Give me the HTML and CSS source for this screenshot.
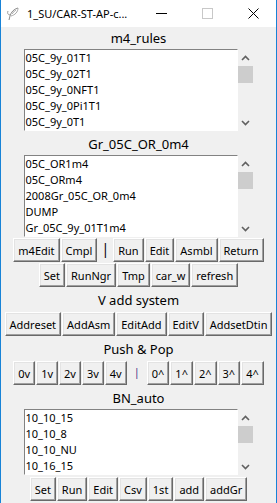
FILE: index.html
```html
<!DOCTYPE html>
<html>
	<head>
		<title>1_SU/CAR-ST-AP-c...</title>
		<link rel="stylesheet" href="styles.css">
	</head>
	<body>
		<div id="window">
			<div id="titlebar">
				<svg class="appIcon" width="16" height="16" viewBox="0 0 16 16">
					<path d="M13 2 C9 3 6 6 5 10 L4 14" fill="none" stroke="#8a8a8a" stroke-width="1"/>
					<path d="M13 2 C13 6 10 9 6 10 M11 4 C9 5 8 7 7 8" fill="none" stroke="#a8a8a8" stroke-width="1"/>
					<path d="M3 5 C2 7 3 9 5 9" fill="none" stroke="#9a9a9a" stroke-width="1"/>
				</svg>
				<span class="titleText">1_SU/CAR-ST-AP-c...</span>
				<span class="winBtn">
					<svg width="11" height="11"><line x1="0" y1="5.5" x2="11" y2="5.5" stroke="#000"/></svg>
				</span>
				<span class="winBtn">
					<svg width="11" height="11"><rect x="0.5" y="0.5" width="10" height="10" fill="none" stroke="#c8c8c8"/></svg>
				</span>
				<span class="winBtn">
					<svg width="11" height="11"><path d="M0.5 0.5 L10.5 10.5 M10.5 0.5 L0.5 10.5" stroke="#000"/></svg>
				</span>
			</div>

			<div id="client">
				<div class="caption first">m4_rules</div>
				<div class="listFrame">
					<div class="listbox">
						<div class="item">05C_9y_01T1</div>
						<div class="item">05C_9y_02T1</div>
						<div class="item">05C_9y_0NFT1</div>
						<div class="item">05C_9y_0Pi1T1</div>
						<div class="item">05C_9y_0T1</div>
					</div>
					<div class="scrollbar">
						<div class="arrow"><svg width="9" height="6"><path d="M1 5 L4.5 1.5 L8 5" fill="none" stroke="#606060" stroke-width="1.6"/></svg></div>
						<div class="thumb"></div>
						<div class="track"></div>
						<div class="arrow"><svg width="9" height="6"><path d="M1 1 L4.5 4.5 L8 1" fill="none" stroke="#606060" stroke-width="1.6"/></svg></div>
					</div>
				</div>

				<div class="caption">Gr_05C_OR_0m4</div>
				<div class="listFrame">
					<div class="listbox">
						<div class="item">05C_OR1m4</div>
						<div class="item">05C_ORm4</div>
						<div class="item">2008Gr_05C_OR_0m4</div>
						<div class="item">DUMP</div>
						<div class="item">Gr_05C_9y_01T1m4</div>
					</div>
					<div class="scrollbar">
						<div class="arrow"><svg width="9" height="6"><path d="M1 5 L4.5 1.5 L8 5" fill="none" stroke="#606060" stroke-width="1.6"/></svg></div>
						<div class="thumb"></div>
						<div class="track"></div>
						<div class="arrow"><svg width="9" height="6"><path d="M1 1 L4.5 4.5 L8 1" fill="none" stroke="#606060" stroke-width="1.6"/></svg></div>
					</div>
				</div>

				<div class="buttonRow topRow">
					<button>m4Edit</button>
					<button>Cmpl</button>
					<span class="sep">|</span>
					<button>Run</button>
					<button>Edit</button>
					<button>Asmbl</button>
					<button>Return</button>
				</div>
				<div class="buttonRow">
					<button>Set</button>
					<button>RunNgr</button>
					<button>Tmp</button>
					<button>car_w</button>
					<button>refresh</button>
				</div>

				<div class="caption">V add system</div>
				<div class="buttonRow">
					<button>Addreset</button>
					<button>AddAsm</button>
					<button>EditAdd</button>
					<button>EditV</button>
					<button>AddsetDtin</button>
				</div>

				<div class="caption">Push &amp; Pop</div>
				<div class="buttonRow">
					<button>0v</button>
					<button>1v</button>
					<button>2v</button>
					<button>3v</button>
					<button>4v</button>
					<span class="sep small">|</span>
					<button>0^</button>
					<button>1^</button>
					<button>2^</button>
					<button>3^</button>
					<button>4^</button>
				</div>

				<div class="caption">BN_auto</div>
				<div class="listFrame">
					<div class="listbox short">
						<div class="item">10_10_15</div>
						<div class="item">10_10_8</div>
						<div class="item">10_10_NU</div>
						<div class="item">10_16_15</div>
					</div>
					<div class="scrollbar">
						<div class="arrow"><svg width="9" height="6"><path d="M1 5 L4.5 1.5 L8 5" fill="none" stroke="#606060" stroke-width="1.6"/></svg></div>
						<div class="thumb"></div>
						<div class="track"></div>
						<div class="arrow"><svg width="9" height="6"><path d="M1 1 L4.5 4.5 L8 1" fill="none" stroke="#606060" stroke-width="1.6"/></svg></div>
					</div>
				</div>
				<div class="buttonRow bottomRow">
					<button>Set</button>
					<button>Run</button>
					<button>Edit</button>
					<button>Csv</button>
					<button>1st</button>
					<button>add</button>
					<button>addGr</button>
				</div>
			</div>
		</div>
	</body>
</html>
```

FILE: styles.css
```css
body {
	margin: 0;
	font-family: "Noto Sans", sans-serif;
	color: #000;
}
#window {
	width: 277px;
	height: 503px;
	box-sizing: border-box;
	border-left: 1px solid #1883d7;
	border-right: 1px solid #1883d7;
	background-color: #f0f0f0;
	overflow: hidden;
}
#titlebar {
	height: 27px;
	background-color: #fff;
	display: flex;
	align-items: center;
}
.appIcon {
	margin-left: 4px;
}
.titleText {
	margin-left: 6px;
	font-size: 11px;
	flex: 1;
}
.winBtn {
	width: 46px;
	height: 27px;
	display: flex;
	align-items: center;
	justify-content: center;
}
#client {
	display: flex;
	flex-direction: column;
	align-items: center;
}
.caption {
	margin-top: 2px;
	height: 22px;
	line-height: 22px;
	font-size: 13px;
}
.caption.first {
	margin-top: 0;
}
.listFrame {
	display: flex;
}
.listbox {
	width: 212px;
	height: 80px;
	background-color: #fff;
	border: 1px solid;
	border-color: #828282 #fff #fff #828282;
	font-size: 11px;
	overflow: hidden;
}
.listbox.short {
	height: 64px;
}
.item {
	height: 16px;
	line-height: 16px;
	padding-left: 1px;
	white-space: nowrap;
}
.scrollbar {
	width: 16px;
	display: flex;
	flex-direction: column;
}
.arrow {
	height: 17px;
	display: flex;
	align-items: center;
	justify-content: center;
}
.thumb {
	height: 17px;
	width: 15px;
	background-color: #cdcdcd;
}
.track {
	flex: 1;
}
.buttonRow {
	display: flex;
	gap: 1px;
	margin-top: 1px;
	white-space: nowrap;
}
.buttonRow.bottomRow {
	margin-top: 2px;
}
button {
	height: 24px;
	margin: 0;
	padding: 0 4px;
	font-family: "Noto Sans", sans-serif;
	font-size: 11px;
	color: #000;
	background-color: #f0f0f0;
	border: 1px solid;
	border-color: #fff #696969 #696969 #fff;
	box-shadow: inset -1px -1px #a0a0a0, inset 1px 1px #e3e3e3;
	border-radius: 0;
}
.sep {
	padding: 0 3px;
	font-size: 14px;
	line-height: 22px;
}
.sep.small {
	padding: 0 6px;
	font-size: 11px;
	color: #4b2f86;
}
```
